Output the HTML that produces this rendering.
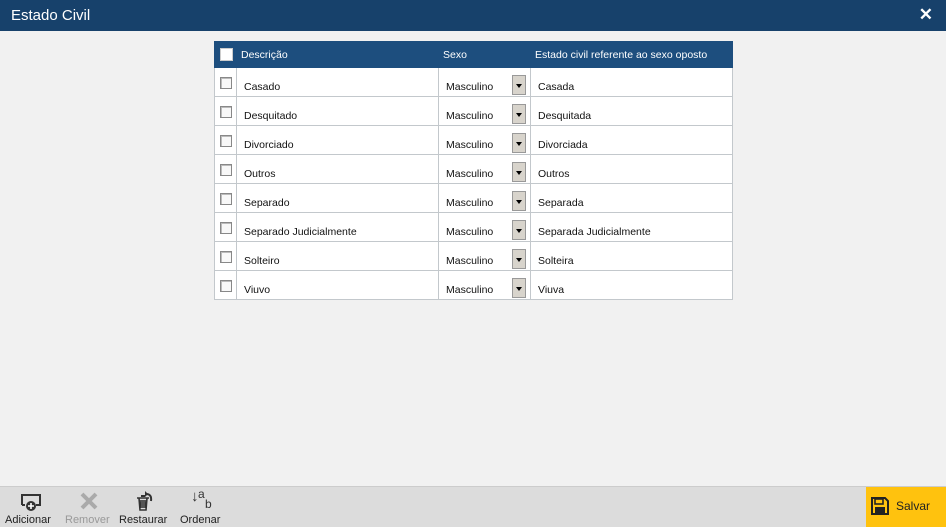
<html><head><style>
body{margin:0;width:946px;height:526px;background:#f1f1f1;font-family:"Liberation Sans",sans-serif;position:relative;overflow:hidden}
.top{position:absolute;left:0;top:0;width:946px;height:31px;background:#17416b;color:#fff;font-size:15px}
.top span{position:absolute;left:11px;top:7px}
.top b{position:absolute;right:13px;top:5px;font-size:17px}
table{position:absolute;left:214px;top:41px;border-collapse:collapse;font-size:10.5px;color:#111;table-layout:fixed;width:518px}
th{background:#1d4e7e;color:#fff;font-weight:normal;text-align:left;height:26px;padding:0 0 0 4px;border:1px solid #1d4e7e;box-sizing:border-box}
tr.r{height:29px}
td{border:1px solid #c3c8cc;background:#fff;padding:9px 0 0 7px;vertical-align:middle;position:relative;box-sizing:border-box;white-space:nowrap}
td.c{vertical-align:top;padding:9px 0 0 5px}
.cb{display:inline-block;width:10px;height:10px;border:1px solid #888;background:#f8f8f8;box-shadow:inset 1px 1px 0 #bbb}
.hcb{display:inline-block;width:11px;height:11px;border:1px solid #ccc;background:#fff;vertical-align:middle}
.dd{position:absolute;right:4px;top:7px;width:14px;height:20px;background:#d8d4cc;border:1px solid #999;box-sizing:border-box}
.dd:after{content:"";position:absolute;left:3px;top:8px;border-left:3px solid transparent;border-right:3px solid transparent;border-top:4px solid #000}
.foot{position:absolute;left:0;top:486px;width:946px;height:40px;background:#dcdcdc;border-top:1px solid #ccc}
.btn{position:absolute;top:27px;font-size:11px;color:#222}
.save{position:absolute;left:866px;top:0;width:80px;height:40px;background:#ffc20e;font-size:12px}
</style></head><body>
<div class="top"><span>Estado Civil</span><b>✕</b></div>
<table>
<colgroup><col style="width:22px"><col style="width:202px"><col style="width:92px"><col style="width:202px"></colgroup>
<tr><th style="padding-left:5px"><span class="hcb"></span></th><th>Descrição</th><th>Sexo</th><th>Estado civil referente ao sexo oposto</th></tr>
<tr class="r"><td class="c"><span class="cb"></span></td><td>Casado</td><td>Masculino<i class="dd"></i></td><td>Casada</td></tr>
<tr class="r"><td class="c"><span class="cb"></span></td><td>Desquitado</td><td>Masculino<i class="dd"></i></td><td>Desquitada</td></tr>
<tr class="r"><td class="c"><span class="cb"></span></td><td>Divorciado</td><td>Masculino<i class="dd"></i></td><td>Divorciada</td></tr>
<tr class="r"><td class="c"><span class="cb"></span></td><td>Outros</td><td>Masculino<i class="dd"></i></td><td>Outros</td></tr>
<tr class="r"><td class="c"><span class="cb"></span></td><td>Separado</td><td>Masculino<i class="dd"></i></td><td>Separada</td></tr>
<tr class="r"><td class="c"><span class="cb"></span></td><td>Separado Judicialmente</td><td>Masculino<i class="dd"></i></td><td>Separada Judicialmente</td></tr>
<tr class="r"><td class="c"><span class="cb"></span></td><td>Solteiro</td><td>Masculino<i class="dd"></i></td><td>Solteira</td></tr>
<tr class="r"><td class="c"><span class="cb"></span></td><td>Viuvo</td><td>Masculino<i class="dd"></i></td><td>Viuva</td></tr>
</table>
<div class="foot">
<svg style="position:absolute;left:20px;top:5px" width="22" height="20"><path d="M2 13V3h18v10h-4M2 13h3" fill="none" stroke="#333" stroke-width="2"/><circle cx="11" cy="14" r="5" fill="#333"/><path d="M11 11v6M8 14h6" stroke="#fff" stroke-width="1.6"/></svg>
<svg style="position:absolute;left:80px;top:5px" width="18" height="18"><path d="M2 2L16 16M16 2L2 16" stroke="#aaa" stroke-width="4"/></svg>
<svg style="position:absolute;left:133px;top:3px" width="22" height="22"><path d="M4 8h12M6 8l1 12h6l1-12M8 10v8M10 10v8M12 10v8" stroke="#333" stroke-width="1.6" fill="none"/><path d="M8 6h4M13 4q6 0 5 7" stroke="#333" stroke-width="2" fill="none"/><path d="M12 1l3 3-3 3z" fill="#333"/></svg>
<div style="position:absolute;left:191px;top:2px;font-size:15px;color:#333;line-height:15px">↓</div>
<div style="position:absolute;left:198px;top:0px;font-size:12px;color:#333">a</div>
<div style="position:absolute;left:205px;top:10px;font-size:12px;color:#333">b</div>
<span class="btn" style="left:5px">Adicionar</span>
<span class="btn" style="left:65px;color:#999">Remover</span>
<span class="btn" style="left:119px">Restaurar</span>
<span class="btn" style="left:180px">Ordenar</span>
<div class="save"><svg style="position:absolute;left:5px;top:10px" width="18" height="18"><path d="M1 1h13l3 3v13H1z" fill="none" stroke="#222" stroke-width="2"/><rect x="4" y="2" width="8" height="5" fill="none" stroke="#222" stroke-width="1.6"/><rect x="4" y="10" width="10" height="6" fill="#222"/></svg><span style="position:absolute;left:30px;top:12px;color:#222">Salvar</span></div>
</div>
</body></html>
